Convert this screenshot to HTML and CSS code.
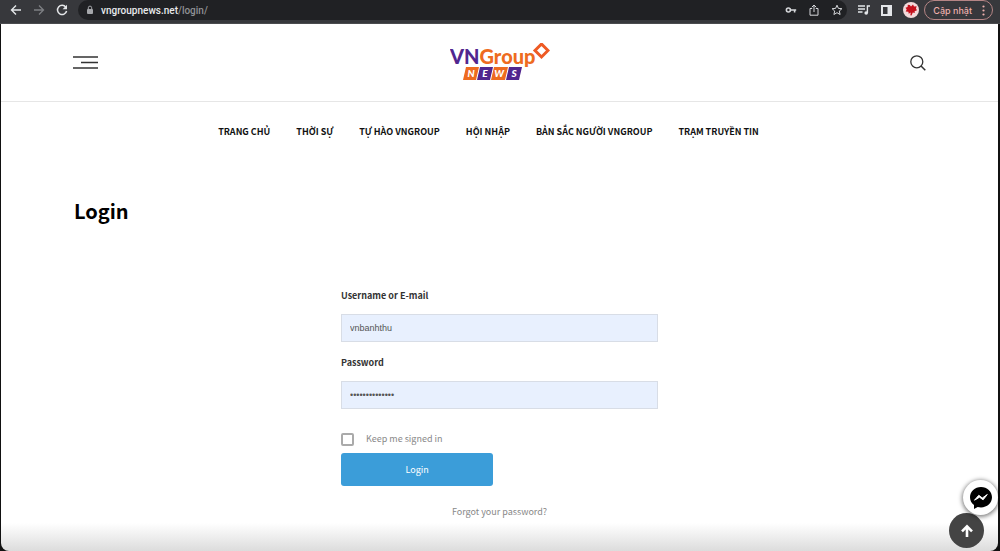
FILE: index.html
```html
<!DOCTYPE html>
<html lang="vi">
<head>
    <meta charset="utf-8">
    <title>Login - VNGroup News</title>
    <link rel="stylesheet" href="styles.css">
</head>

<body>

<div class="toolbar">
    <button class="tool" type="button" aria-label="Back">
        <svg width="12" height="12" viewBox="0 0 12 12"><path d="M11 6H2M6 1.5L1.5 6 6 10.5" fill="none" stroke="#e4e6e9" stroke-width="1.4"/></svg>
    </button>
    <button class="tool" type="button" aria-label="Forward">
        <svg width="12" height="12" viewBox="0 0 12 12"><path d="M1 6h9M6 1.5L10.5 6 6 10.5" fill="none" stroke="#7d7f83" stroke-width="1.3"/></svg>
    </button>
    <button class="tool" type="button" aria-label="Reload">
        <svg width="12" height="12" viewBox="0 0 12 12"><path d="M9.8 3.2A4.6 4.6 0 1 0 10.6 7" fill="none" stroke="#e4e6e9" stroke-width="1.5"/><path d="M11 .8v4.4H6.6z" fill="#e4e6e9"/></svg>
    </button>
    <div class="address">
        <svg width="8" height="10" viewBox="0 0 8 10"><rect x="1" y="4" width="6" height="5" rx="1" fill="#a5a7ab"/><path d="M2.3 4.5V2.8a1.7 1.7 0 0 1 3.4 0v1.7" fill="none" stroke="#a5a7ab"/></svg>
        <p class="url">vngroupnews.net<span>/login/</span></p>
        <button class="tool" type="button" aria-label="Saved passwords">
            <svg width="12" height="10" viewBox="0 0 12 10"><circle cx="3.4" cy="5" r="2" fill="none" stroke="#d5d7da" stroke-width="1.6"/><path d="M5.4 5h5.8M9.6 5v2.4" fill="none" stroke="#d5d7da" stroke-width="1.6"/></svg>
        </button>
        <button class="tool" type="button" aria-label="Share">
            <svg width="10" height="12" viewBox="0 0 10 12"><path d="M3.2 4.5H1v6.7h8V4.5H6.8M5 8V1M2.8 3.2L5 1l2.2 2.2" fill="none" stroke="#d5d7da"/></svg>
        </button>
        <button class="tool" type="button" aria-label="Bookmark">
            <svg width="12" height="12" viewBox="0 0 12 12"><path d="M6 1.2l1.4 3.2 3.5.3-2.6 2.3.8 3.5L6 8.7l-3.1 1.8.8-3.5L1.1 4.7l3.5-.3z" fill="none" stroke="#d5d7da"/></svg>
        </button>
    </div>
    <button class="tool" type="button" aria-label="Media">
        <svg width="12" height="12" viewBox="0 0 12 12"><path d="M0 2h7M0 5h7M0 8h4.5M9.4 9V2H12" fill="none" stroke="#e4e6e9" stroke-width="1.4"/><circle cx="8.2" cy="9" r="1.8" fill="#e4e6e9"/></svg>
    </button>
    <button class="tool" type="button" aria-label="Side panel">
        <svg width="11" height="11" viewBox="0 0 11 11"><path d="M0 0h11v11H0zM2 2v7h4.5V2z" fill="#e4e6e9" fill-rule="evenodd"/></svg>
    </button>
    <button class="tool" type="button" aria-label="Profile">
        <svg width="16" height="16" viewBox="0 0 16 16"><circle cx="8" cy="8" r="8" fill="#f3dadb"/><path d="M8 4.6L10 2.4l1 2 2.6-.2-.6 2.5 1 1.6-2.4.9.2 1.8-2-.6-1.3 3.2-1.2-.3.5-2.9-2.1 1.4-.3-2.1-2.7-.2 1-2-1.2-1.8 2.1-.6L4.8 2.8l2 .2z" fill="#c4101c"/></svg>
    </button>
    <button class="update" type="button">Cập nhật
        <svg width="3" height="11" viewBox="0 0 3 11"><g fill="#eeb0ad"><circle cx="1.5" cy="1.5" r="1.1"/><circle cx="1.5" cy="5.5" r="1.1"/><circle cx="1.5" cy="9.5" r="1.1"/></g></svg>
    </button>
</div>

<div class="page">
    <header class="header">
        <button class="icon-button" type="button" aria-label="Menu">
            <svg width="25" height="13" viewBox="0 0 25 13"><path d="M0 1h25M8 6.5h17M0 12h25" stroke="#333" stroke-width="1.3"/></svg>
        </button>
        <a class="logo" href="#" aria-label="VNGroup News">
            <svg width="100" height="40" viewBox="0 0 100 40">
                <text class="logo-name" x="0" y="21"><tspan fill="#51268f">VN</tspan><tspan fill="#ee6b20">Group</tspan></text>
                <path d="M91.5 1L98 7.5 91.5 14 85 7.5z" fill="#fff" stroke="#ee5a24" stroke-width="3"/>
                <path d="M16 24h13l-3 13H13z" fill="#ee6b20"/>
                <path d="M30 24h13l-3 13H27z" fill="#51268f"/>
                <path d="M44 24h14l-3 13H41z" fill="#ee6b20"/>
                <path d="M59 24h13l-3 13H56z" fill="#51268f"/>
                <g class="logo-news"><text x="21" y="34">N</text><text x="35" y="34">E</text><text x="49" y="34">W</text><text x="64" y="34">S</text></g>
            </svg>
        </a>
        <button class="icon-button" type="button" aria-label="Search">
            <svg width="16" height="16" viewBox="0 0 16 16"><circle cx="6.8" cy="6.8" r="6" fill="none" stroke="#333" stroke-width="1.3"/><path d="M11 11l4.3 4.3" stroke="#333" stroke-width="1.5"/></svg>
        </button>
    </header>

    <nav class="menu">
        <a href="#">TRANG CHỦ</a>
        <a href="#">THỜI SỰ</a>
        <a href="#">TỰ HÀO VNGROUP</a>
        <a href="#">HỘI NHẬP</a>
        <a href="#">BẢN SẮC NGƯỜI VNGROUP</a>
        <a href="#">TRẠM TRUYỀN TIN</a>
    </nav>

    <main class="content">
        <h1>Login</h1>

        <form class="login">
            <label class="field-label" for="username">Username or E-mail</label>
            <input class="field" type="text" id="username" name="username" value="vnbanhthu">

            <label class="field-label" for="password">Password</label>
            <input class="field" type="password" id="password" name="password" value="banhthu1234567">

            <label class="remember"><input type="checkbox" name="remember">Keep me signed in</label>
            <button class="submit" type="submit">Login</button>
            <a class="forgot" href="#">Forgot your password?</a>
        </form>
    </main>
</div>

<div class="floating">
    <button class="messenger" type="button" aria-label="Messenger">
        <svg width="22" height="22" viewBox="0 0 22 22"><path d="M11 0C4.9 0 0 4.5 0 10.3c0 3.2 1.5 5.9 4 7.7V22l3.7-2c1 .3 2.1.4 3.3.4 6.1 0 11-4.4 11-10.1S17.1 0 11 0z" fill="#000"/><path d="M4.5 13.2L8.8 8.3l3.5 2.7 5-3.5-4.2 5.3-3.6-2.6z" fill="#fff" stroke="#fff" stroke-linejoin="round"/></svg>
    </button>
    <button class="to-top" type="button" aria-label="Back to top">
        <svg width="14" height="14" viewBox="0 0 14 14"><path d="M7 13V2.5M2 7.3l5-5 5 5" fill="none" stroke="#fff" stroke-width="2.6"/></svg>
    </button>
</div>

</body>
</html>
```
FILE: styles.css
```css
* {
    box-sizing: border-box;
}

body {
    display: flex;
    flex-direction: column;
    min-height: 100vh;
    margin: 0;
    background-color: #111;
    font-family: "Noto Sans CJK JP", "Open Sans", sans-serif;
}

button {
    padding: 0;
    border: 0;
    background: none;
    font-family: inherit;
    cursor: pointer;
}

svg {
    display: block;
}

a {
    text-decoration: none;
}

/* browser bar */
.toolbar {
    display: flex;
    align-items: center;
    gap: 11px;
    height: 24px;
    padding: 0 7px 3px 10px;
    background-color: #37383c;
    border-bottom: 1px solid #4a4b4e;
}

.address {
    display: flex;
    flex: 1;
    align-items: center;
    gap: 12px;
    height: 20px;
    margin-left: -1px;
    padding: 0 4px 0 8px;
    border-radius: 10px;
    background-color: #202124;
}

.url {
    flex: 1;
    margin: 0 0 0 -5px;
    font-family: Roboto, sans-serif;
    font-size: 10px;
    font-weight: 500;
    color: #e8eaed;
}

.url span {
    color: #8f9195;
}

.update {
    display: flex;
    align-items: center;
    gap: 10px;
    height: 20px;
    margin-left: -6px;
    padding: 0 7px 0 8px;
    border: 1px solid #b58585;
    border-radius: 10px;
    font-family: Inter, sans-serif;
    font-size: 9px;
    font-weight: 500;
    color: #eeb0ad;
}

/* site */
.page {
    flex: 1;
    margin: 0 2px 0 1px;
    border-radius: 0 0 8px 8px;
    background: linear-gradient(to top, #dcdcdc, #fff 28px);
}

.header {
    display: flex;
    align-items: center;
    justify-content: space-between;
    height: 78px;
    padding: 0 72px;
    border-bottom: 1px solid #e6e6e6;
}

.icon-button {
    display: flex;
    justify-content: flex-end;
    width: 25px;
}

.logo-name {
    font-family: Lato, sans-serif;
    font-size: 20px;
    font-weight: 900;
}

.logo-news {
    fill: #fff;
    font-family: Lato, sans-serif;
    font-size: 10px;
    font-style: italic;
    font-weight: 900;
    text-anchor: middle;
}

.menu {
    display: flex;
    justify-content: center;
    gap: 26px;
    margin: 21px 0 0;
    padding-right: 22px;
    line-height: 18px;
}

.menu a {
    font-size: 9px;
    font-weight: 700;
    color: #111;
}

.content {
    padding: 54px 73px 28px;
}

h1 {
    margin: 0;
    font-size: 20px;
    line-height: 32px;
    color: #000;
}

.login {
    display: flex;
    flex-direction: column;
    width: 37%;
    min-width: 317px;
    margin: 61px auto 0;
    font-size: 9px;
}

.field-label {
    line-height: 16px;
    font-weight: 700;
    color: #333;
}

.field {
    height: 28px;
    margin: 10px 0 13px;
    padding: 0 8px;
    border: 1px solid #d8dde6;
    background-color: #e8f0fe;
    font-family: "Liberation Sans", sans-serif;
    font-size: 9px;
    color: #555;
}

.remember {
    display: flex;
    align-items: center;
    gap: 12px;
    margin-top: 9px;
    line-height: 16px;
    color: #888;
}

.remember input {
    appearance: none;
    width: 13px;
    height: 13px;
    margin: 0;
    border: 2px solid #aaa;
    border-radius: 2px;
    background-color: #fff;
}

.submit {
    width: 48%;
    height: 33px;
    margin-top: 6px;
    border-radius: 3px;
    background-color: #3b9dd9;
    font-size: 9px;
    color: #fff;
}

.forgot {
    margin-top: 18px;
    text-align: center;
    line-height: 16px;
    color: #888;
}

.floating {
    position: fixed;
    right: 2px;
    bottom: 3px;
}

.messenger,
.to-top {
    display: flex;
    align-items: center;
    justify-content: center;
    width: 35px;
    height: 35px;
    border-radius: 50%;
}

.messenger {
    position: relative;
    z-index: 1;
    margin: 0 0 -2px 14px;
    background-color: #fff;
    box-shadow: 0 1px 4px 1px rgba(0, 0, 0, 0.5);
}

.to-top {
    background-color: #444;
}
```
